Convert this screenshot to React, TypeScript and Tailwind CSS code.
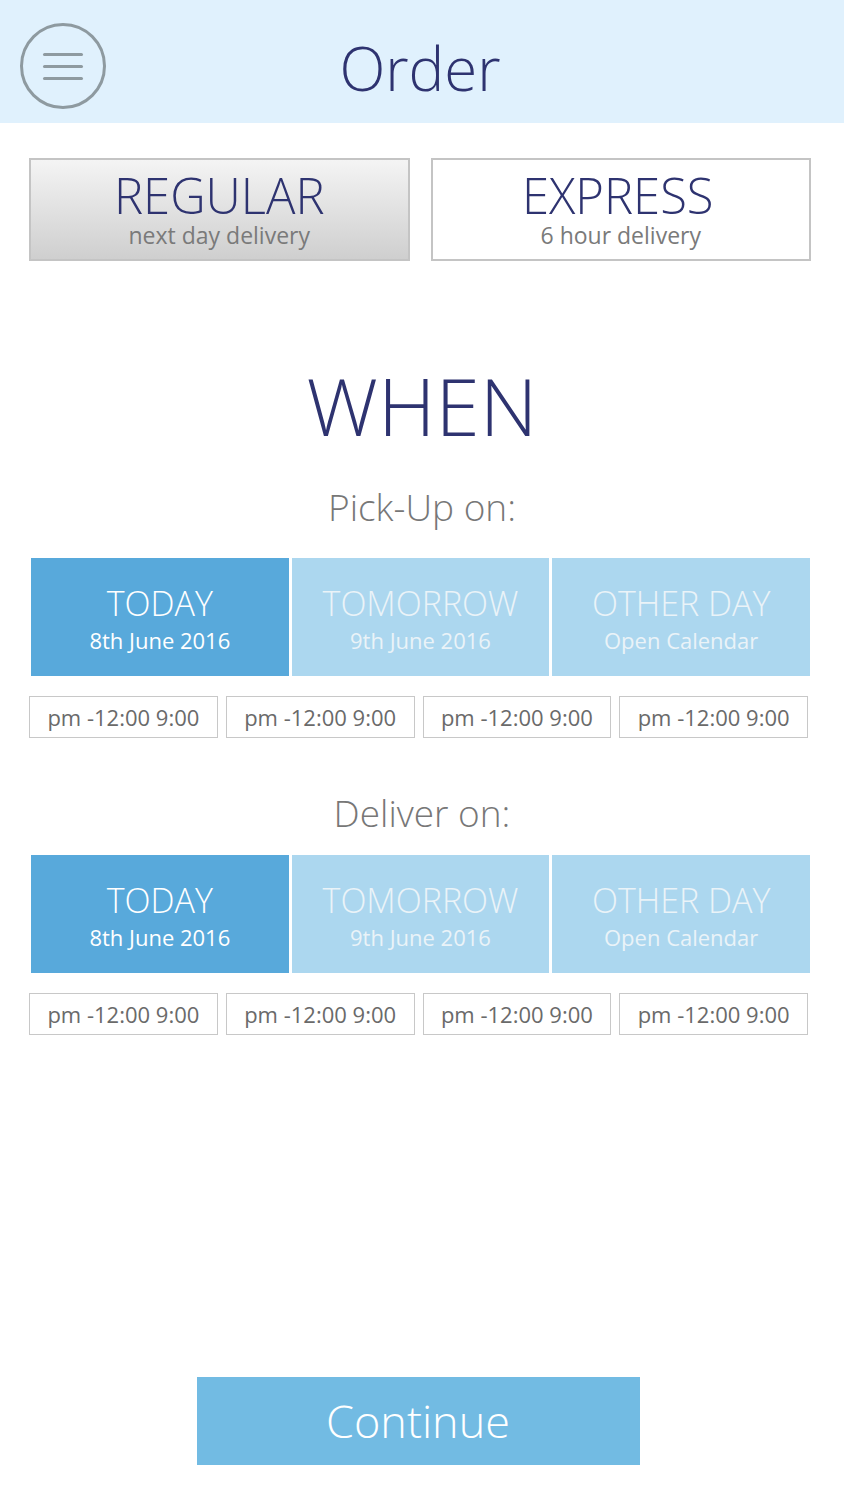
import React from 'react';

const days = [
  { title: 'TODAY', sub: '8th June 2016', active: true },
  { title: 'TOMORROW', sub: '9th June 2016', active: false },
  { title: 'OTHER DAY', sub: 'Open Calendar', active: false },
];

const slots = ['pm -12:00 9:00', 'pm -12:00 9:00', 'pm -12:00 9:00', 'pm -12:00 9:00'];

const DayPicker: React.FC = () => (
  <>
    <div className="ml-[31px] mr-[34px] grid grid-cols-3 gap-[3px]">
      {days.map((d) => (
        <div
          key={d.title}
          className={`flex h-[118px] flex-col items-center justify-center pt-[4px] ${
            d.active ? 'bg-[#58a9db] text-white' : 'bg-[#acd7ef] text-[#eaf3f8]'
          }`}
        >
          <div className="text-[34px] font-light leading-[42px]">{d.title}</div>
          <div className="text-[22px] leading-[32px]">{d.sub}</div>
        </div>
      ))}
    </div>
    <div className="ml-[29px] mr-[36px] mt-[20px] grid grid-cols-4 gap-[8px]">
      {slots.map((s, i) => (
        <div
          key={i}
          className="flex h-[42px] items-center justify-center border border-[#c8c8c8] text-[22px] text-[#6a6a6a]"
        >
          {s}
        </div>
      ))}
    </div>
  </>
);

export default function App() {
  return (
    <div className="flex h-[1500px] w-[844px] flex-col bg-white font-['Open_Sans',sans-serif]">
      <div className="relative flex h-[123px] items-center justify-center bg-[#e0f1fd]">
        <button className="absolute left-[20px] top-[23px] flex h-[86px] w-[86px] flex-col items-center justify-center gap-[9px] rounded-full border-[3px] border-[#8e9aa0]">
          <span className="h-[3px] w-[40px] rounded bg-[#8e9aa0]" />
          <span className="h-[3px] w-[40px] rounded bg-[#8e9aa0]" />
          <span className="h-[3px] w-[40px] rounded bg-[#8e9aa0]" />
        </button>
        <h1 className="ml-[-4px] mt-[12px] text-[60px] font-light leading-none text-[#2e3370]">Order</h1>
      </div>

      <div className="ml-[29px] mr-[33px] mt-[35px] grid grid-cols-2 gap-[21px]">
        <div className="flex h-[103px] flex-col items-center justify-center border-2 border-[#c4c4c4] bg-gradient-to-b from-[#f4f4f4] to-[#cfcfcf]">
          <div className="text-[49px] font-light leading-[50px] text-[#2e3370]">REGULAR</div>
          <div className="text-[23px] leading-[30px] text-[#7a7a7a]">next day delivery</div>
        </div>
        <div className="flex h-[103px] flex-col items-center justify-center border-2 border-[#c4c4c4] bg-white">
          <div className="mr-[6px] text-[49px] font-light leading-[50px] text-[#2e3370]">EXPRESS</div>
          <div className="text-[23px] leading-[30px] text-[#7a7a7a]">6 hour delivery</div>
        </div>
      </div>

      <div className="mt-[94px] text-center text-[80px] font-light leading-[100px] text-[#2e3370]">WHEN</div>
      <div className="mt-[27px] text-center text-[37px] font-light leading-[50px] text-[#777]">Pick-Up on:</div>
      <div className="mt-[26px]">
        <DayPicker />
      </div>

      <div className="mt-[50px] text-center text-[37px] font-light leading-[50px] text-[#777]">Deliver on:</div>
      <div className="mt-[17px]">
        <DayPicker />
      </div>

      <div className="mt-auto mb-[35px] flex justify-center">
        <button className="ml-[-8px] h-[88px] w-[443px] bg-[#72bbe3] text-[45px] font-light text-white">Continue</button>
      </div>
    </div>
  );
}
